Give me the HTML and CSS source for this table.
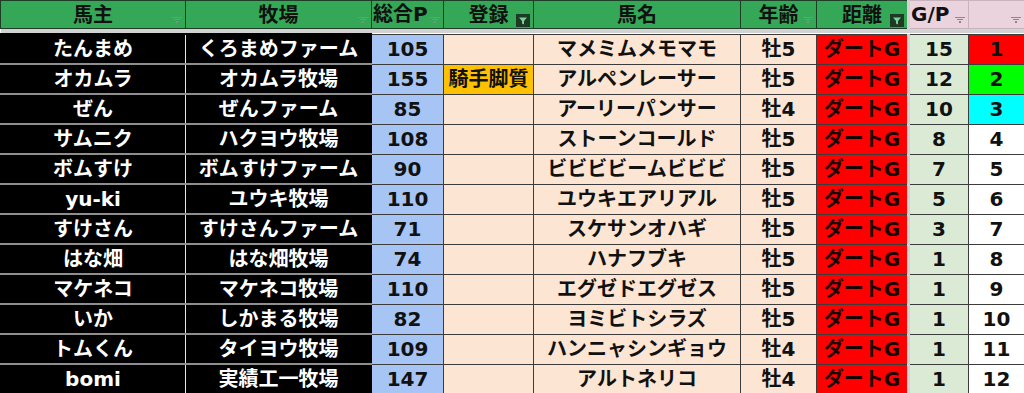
FILE: index.html
```html
<!DOCTYPE html>
<html lang="ja">
<head>
<meta charset="utf-8">
<link rel="stylesheet" href="styles.css">
</head>
<body>
<table class="sheet">
  <colgroup>
    <col class="w-owner"><col class="w-farm"><col class="w-total"><col class="w-reg"><col class="w-horse"><col class="w-age"><col class="w-dist"><col class="w-gp"><col class="w-rank">
  </colgroup>
  <thead>
    <tr class="head">
      <th class="hg">馬主<span class="flt"></span></th>
      <th class="hg">牧場<span class="flt"></span></th>
      <th class="hg left">総合P<span class="flt"></span></th>
      <th class="hg">登録<span class="flt-on"><svg viewBox="0 0 14 13" width="14" height="13"><rect width="14" height="13" fill="#1c3a24"/><path d="M3 3.5h8l-3 3.5v3.5l-2-1v-2.5z" fill="#7fd19a"/></svg></span></th>
      <th class="hg">馬名</th>
      <th class="hg">年齢<span class="flt"></span></th>
      <th class="hg">距離<span class="flt-on"><svg viewBox="0 0 14 13" width="14" height="13"><rect width="14" height="13" fill="#1c3a24"/><path d="M3 3.5h8l-3 3.5v3.5l-2-1v-2.5z" fill="#7fd19a"/></svg></span></th>
      <th class="hp left frz">G/P<span class="flt"></span></th>
      <th class="hp"><span class="flt"></span></th>
    </tr>
    <tr class="freeze"><td colspan="9"></td></tr>
  </thead>
  <tbody>
    <tr><td class="bk">たんまめ</td><td class="bk">くろまめファーム</td><td class="pt">105</td><td class="pe"></td><td class="pe">マメミムメモマモ</td><td class="pe">牡5</td><td class="rd">ダートG</td><td class="gp">15</td><td class="rk r1">1</td></tr>
    <tr><td class="bk">オカムラ</td><td class="bk">オカムラ牧場</td><td class="pt">155</td><td class="or">騎手脚質</td><td class="pe">アルペンレーサー</td><td class="pe">牡5</td><td class="rd">ダートG</td><td class="gp">12</td><td class="rk r2">2</td></tr>
    <tr><td class="bk">ぜん</td><td class="bk">ぜんファーム</td><td class="pt">85</td><td class="pe"></td><td class="pe">アーリーパンサー</td><td class="pe">牡4</td><td class="rd">ダートG</td><td class="gp">10</td><td class="rk r3">3</td></tr>
    <tr><td class="bk">サムニク</td><td class="bk">ハクヨウ牧場</td><td class="pt">108</td><td class="pe"></td><td class="pe">ストーンコールド</td><td class="pe">牡5</td><td class="rd">ダートG</td><td class="gp">8</td><td class="rk">4</td></tr>
    <tr><td class="bk">ボムすけ</td><td class="bk">ボムすけファーム</td><td class="pt">90</td><td class="pe"></td><td class="pe">ビビビビームビビビ</td><td class="pe">牡5</td><td class="rd">ダートG</td><td class="gp">7</td><td class="rk">5</td></tr>
    <tr><td class="bk">yu-ki</td><td class="bk">ユウキ牧場</td><td class="pt">110</td><td class="pe"></td><td class="pe">ユウキエアリアル</td><td class="pe">牡5</td><td class="rd">ダートG</td><td class="gp">5</td><td class="rk">6</td></tr>
    <tr><td class="bk">すけさん</td><td class="bk">すけさんファーム</td><td class="pt">71</td><td class="pe"></td><td class="pe">スケサンオハギ</td><td class="pe">牡5</td><td class="rd">ダートG</td><td class="gp">3</td><td class="rk">7</td></tr>
    <tr><td class="bk">はな畑</td><td class="bk">はな畑牧場</td><td class="pt">74</td><td class="pe"></td><td class="pe">ハナフブキ</td><td class="pe">牡5</td><td class="rd">ダートG</td><td class="gp">1</td><td class="rk">8</td></tr>
    <tr><td class="bk">マケネコ</td><td class="bk">マケネコ牧場</td><td class="pt">110</td><td class="pe"></td><td class="pe">エグゼドエグゼス</td><td class="pe">牡5</td><td class="rd">ダートG</td><td class="gp">1</td><td class="rk">9</td></tr>
    <tr><td class="bk">いか</td><td class="bk">しかまる牧場</td><td class="pt">82</td><td class="pe"></td><td class="pe">ヨミビトシラズ</td><td class="pe">牡5</td><td class="rd">ダートG</td><td class="gp">1</td><td class="rk">10</td></tr>
    <tr><td class="bk">トムくん</td><td class="bk">タイヨウ牧場</td><td class="pt">109</td><td class="pe"></td><td class="pe">ハンニャシンギョウ</td><td class="pe">牡4</td><td class="rd">ダートG</td><td class="gp">1</td><td class="rk">11</td></tr>
    <tr><td class="bk">bomi</td><td class="bk">実績工一牧場</td><td class="pt">147</td><td class="pe"></td><td class="pe">アルトネリコ</td><td class="pe">牡4</td><td class="rd">ダートG</td><td class="gp">1</td><td class="rk">12</td></tr>
  </tbody>
</table>
</body>
</html>
```

FILE: styles.css
```css
html, body {
  margin: 0;
  padding: 0;
  background: #ffffff;
  overflow: hidden;
}

.sheet {
  table-layout: fixed;
  width: 1024px;
  border-collapse: collapse;
  font-family: "DejaVu Sans", "Noto Sans CJK JP", sans-serif;
  font-weight: bold;
  font-size: 20px;
  color: #111;
}

.w-owner { width: 185px; }
.w-farm { width: 186px; }
.w-total { width: 72px; }
.w-reg { width: 90px; }
.w-horse { width: 207px; }
.w-age { width: 76px; }
.w-dist { width: 92px; }
.w-gp { width: 60px; }
.w-rank { width: 56px; }

.sheet th, .sheet td {
  padding: 0 1px;
  text-align: center;
  white-space: nowrap;
  overflow: hidden;
  line-height: 1;
}

.head th {
  height: 26px;
  position: relative;
  font-weight: bold;
  font-family: "Noto Sans CJK JP", "DejaVu Sans", sans-serif;
  padding-bottom: 1px;
}
.head th.left { text-align: left; padding-left: 1px; font-family: "DejaVu Sans", "Noto Sans CJK JP", sans-serif; }

.hg {
  background: #34a857;
  border: 1px solid #1d3d27;
}
.hp {
  background: #ead3dd;
  border: 1px solid #c9b4bd;
}
.frz, .gp {
  border-left: 3px solid #d2d2d2 !important;
}

.freeze td {
  height: 4px;
  padding: 0;
  background: #d2d2d2;
  border: none;
}

.flt {
  position: absolute;
  right: 3px;
  bottom: 5px;
  width: 10px;
  height: 6px;
  background:
    linear-gradient(#8a8a8a, #8a8a8a) 0 0 / 10px 1px no-repeat,
    linear-gradient(#8a8a8a, #8a8a8a) 2px 2px / 6px 1px no-repeat,
    linear-gradient(#8a8a8a, #8a8a8a) 4px 4px / 2px 2px no-repeat;
}
.flt-on {
  position: absolute;
  right: 3px;
  bottom: 1px;
  width: 14px;
  height: 13px;
  line-height: 0;
}

tbody td {
  height: 28px;
  border: 1px solid #3c3c3c;
}

.bk {
  background: #000;
  color: #fff;
  border-top: 2px solid #8e8e8e !important;
  border-bottom: 2px solid #8e8e8e !important;
  border-left: 1px solid #000;
  border-right: 1px solid #e8e8e8;
}
tbody tr:first-child .bk { border-top-color: #000 !important; }
.bk + .bk { border-right-color: #000; border-left-color: #e8e8e8; }

.pt { background: #a6c4f4; }
.pe { background: #fce5d3; }
.or { background: #ffc000; }
.rd { background: #ff0000; color: #1a0000; }
.gp { background: #dbead5; }
.rk { background: #fff; }
.r1 { background: #ff0000; }
.r2 { background: #00ff00; }
.r3 { background: #00ffff; }
```
